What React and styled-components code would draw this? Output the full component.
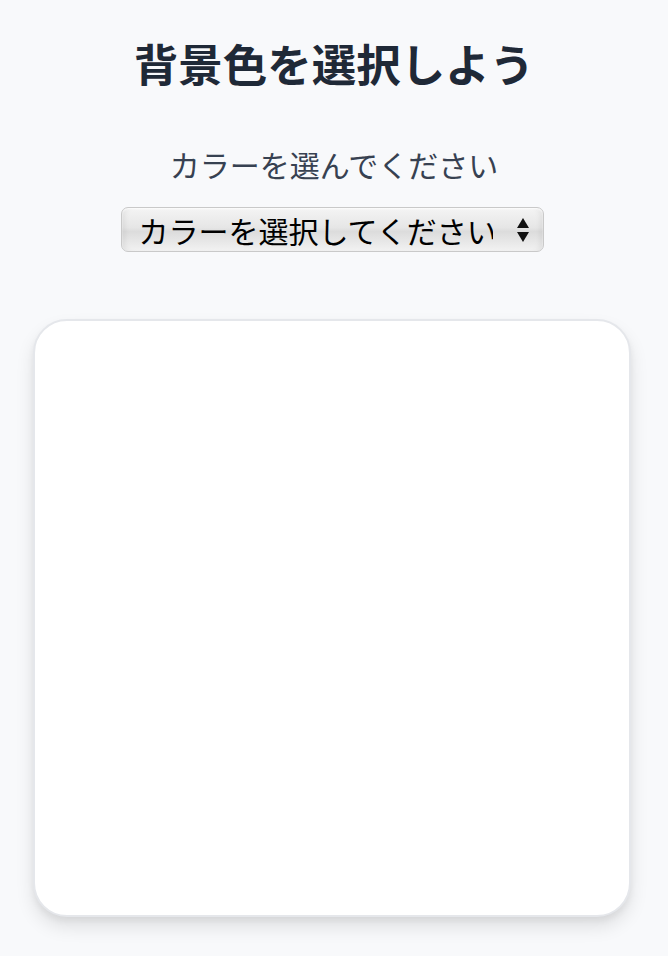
import styled, { createGlobalStyle } from "styled-components";

const GlobalStyle = createGlobalStyle`
  body {
    margin: 0;
    background: #f8f9fb;
    font-family: "Noto Sans CJK JP", "Noto Sans", sans-serif;
  }
`;

const Page = styled.div`
  min-height: 100vh;
  display: flex;
  flex-direction: column;
  align-items: center;
  padding: 32px 30px 40px;
  box-sizing: border-box;
`;

const Title = styled.h1`
  margin: 0;
  font-size: 44.5px;
  line-height: 62px;
  font-weight: 700;
  color: #1f2937;
`;

const Label = styled.label`
  margin-top: 50px;
  font-size: 30px;
  line-height: 40px;
  color: #374151;
`;

const SelectWrap = styled.div`
  position: relative;
  margin-top: 23px;
  width: 423px;
  margin-right: 4px;
`;

const Select = styled.select`
  appearance: none;
  width: 100%;
  height: 45px;
  padding: 0 50px 0 17px;
  border: 1px solid #c9c9c9;
  border-radius: 7px;
  background: linear-gradient(
    to bottom,
    #f4f4f4 0%,
    #e6e6e6 45%,
    #dcdcdc 55%,
    #f2f2f2 100%
  );
  box-shadow: inset 0 1px 2px rgba(255, 255, 255, 0.9),
    inset 6px 0 6px -4px rgba(0, 0, 0, 0.08),
    inset -6px 0 6px -4px rgba(0, 0, 0, 0.08);
  font-family: inherit;
  font-size: 30px;
  color: #000;
  outline: none;
`;

const Arrows = styled.svg`
  position: absolute;
  right: 14px;
  top: 50%;
  transform: translateY(-50%);
  pointer-events: none;
`;

const Canvas = styled.div`
  margin-top: 67px;
  margin-right: 4px;
  width: 598px;
  height: 598px;
  box-sizing: border-box;
  background: ${(p) => p.color};
  border: 2px solid #e5e7eb;
  border-radius: 34px;
  box-shadow: 0 10px 18px rgba(0, 0, 0, 0.1), 0 4px 6px rgba(0, 0, 0, 0.05);
`;

const App = () => {
  return (
    <>
      <GlobalStyle />
      <Page>
        <Title>背景色を選択しよう</Title>
        <Label htmlFor="color">カラーを選んでください</Label>
        <SelectWrap>
          <Select id="color" defaultValue="">
            <option value="">カラーを選択してください</option>
            <option value="red">赤</option>
            <option value="blue">青</option>
            <option value="green">緑</option>
          </Select>
          <Arrows width="14" height="26" viewBox="0 0 14 26">
            <path d="M7 1 L13 11 L1 11 Z" fill="#111" />
            <path d="M7 25 L13 15 L1 15 Z" fill="#111" />
          </Arrows>
        </SelectWrap>
        <Canvas color="#ffffff" />
      </Page>
    </>
  );
};

export default App;
